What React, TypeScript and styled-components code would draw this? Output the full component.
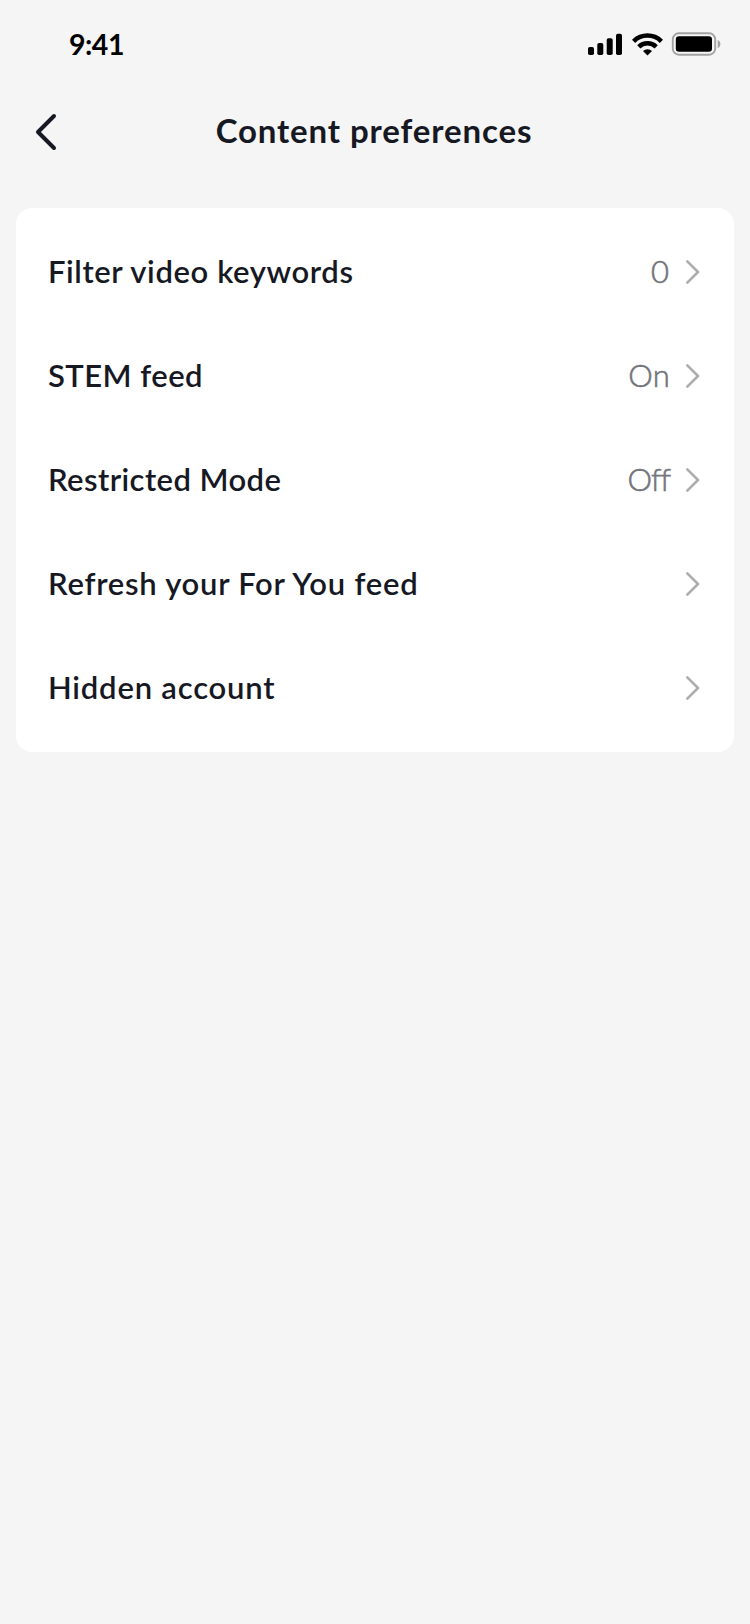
import React from 'react';
import styled, { createGlobalStyle } from 'styled-components';

const GlobalStyle = createGlobalStyle`
  *, *::before, *::after { box-sizing: border-box; }
  body {
    margin: 0;
    background: #f5f5f5;
    color: #161823;
    font-family: Lato, 'Open Sans', sans-serif;
  }
`;

const Screen = styled.div`
  width: 750px;
  min-height: 1624px;
  display: flex;
  flex-direction: column;
  background: #f5f5f5;
`;

const StatusBar = styled.div`
  height: 88px;
  display: flex;
  align-items: center;
  justify-content: space-between;
  padding: 0 28px 0 69px;
`;

const Time = styled.span`
  color: #000;
  font-size: 28.5px;
  font-weight: 700;
  line-height: 34px;
  letter-spacing: -0.5px;
  padding-bottom: 1px;
`;

const StatusIcons = styled.svg`
  display: block;
  width: 134px;
  height: 24px;
`;

const Header = styled.header`
  height: 88px;
  display: grid;
  grid-template-columns: 80px 1fr 80px;
  align-items: center;
  margin-bottom: 32px;
`;

const BackButton = styled.button`
  width: 80px;
  height: 88px;
  display: flex;
  align-items: center;
  padding: 0 0 0 32px;
  border: 0;
  background: none;
  color: #161823;
`;

const Title = styled.h1`
  margin: 0;
  padding: 0 2px 4px 0;
  text-align: center;
  font-size: 33px;
  font-weight: 700;
  line-height: 40px;
  letter-spacing: 0.88px;
`;

const Card = styled.main`
  margin: 0 16px;
  padding: 12px 32px;
  border-radius: 16px;
  background: #fff;
`;

const Row = styled.div`
  height: 104px;
  display: flex;
  align-items: center;
`;

const Label = styled.span<{ $tracking: number }>`
  flex: 1;
  padding-bottom: 2px;
  font-size: 31px;
  font-weight: 600;
  line-height: 36px;
  letter-spacing: ${p => p.$tracking}px;
`;

const Value = styled.span<{ $gap: number; $tracking: number }>`
  margin-right: ${p => p.$gap}px;
  padding-bottom: 2px;
  color: #73747b;
  font-size: 31px;
  font-weight: 300;
  line-height: 36px;
  letter-spacing: ${p => p.$tracking}px;
  -webkit-text-stroke: 0.6px #73747b;
  font-variant-ligatures: none;
`;

const Chevron = styled.svg`
  display: block;
  width: 18px;
  height: 28px;
`;

const rows = [
  { label: 'Filter video keywords', tracking: 0.6, value: '0', gap: 15, valueTracking: 0 },
  { label: 'STEM feed', tracking: 0.45, value: 'On', gap: 14, valueTracking: 0.3 },
  { label: 'Restricted Mode', tracking: 0.42, value: 'Off', gap: 14, valueTracking: -1 },
  { label: 'Refresh your For You feed', tracking: 0.75, value: '', gap: 0, valueTracking: 0 },
  { label: 'Hidden account', tracking: 0.8, value: '', gap: 0, valueTracking: 0 },
];

export default function App() {
  return (
    <Screen>
      <GlobalStyle />
      <StatusBar>
        <Time>9:41</Time>
        <StatusIcons viewBox="0 0 134 24">
          <rect x="0" y="15" width="6" height="8" rx="1.8" />
          <rect x="9.3" y="11" width="6" height="12" rx="1.8" />
          <rect x="18.7" y="6.3" width="6" height="16.7" rx="1.8" />
          <rect x="28" y="1.7" width="6" height="21.3" rx="1.8" />
          <g fill="none" stroke="#000" strokeWidth="4.5">
            <path d="M45.6 9.3a19.8 19.8 0 0 1 27.8 0" />
            <path d="M50.8 14.9a12.4 12.4 0 0 1 17.4 0" />
          </g>
          <path d="M59.5 23.6l-4.5-4.6a6.4 6.4 0 0 1 9 0z" />
          <rect x="84.8" y="1.3" width="42.4" height="21.4" rx="6" fill="none" stroke="#a3a3a3" strokeWidth="1.9" />
          <rect x="87.8" y="4.2" width="36.2" height="15.6" rx="3.2" />
          <path d="M129.7 8v8.2c1.7-.7 2.7-2.2 2.7-4.1s-1-3.4-2.7-4.1z" fill="#a3a3a3" />
        </StatusIcons>
      </StatusBar>
      <Header>
        <BackButton aria-label="Back">
          <svg width="28" height="40" viewBox="0 0 28 40" fill="none" stroke="currentColor" strokeWidth="4" strokeLinecap="round" strokeLinejoin="round">
            <path d="M22 4L6 20l16 16" />
          </svg>
        </BackButton>
        <Title>Content preferences</Title>
      </Header>
      <Card>
        {rows.map(row => (
          <Row key={row.label}>
            <Label $tracking={row.tracking}>{row.label}</Label>
            {row.value && <Value $gap={row.gap} $tracking={row.valueTracking}>{row.value}</Value>}
            <Chevron viewBox="0 0 18 28" fill="none" stroke="#adadb0" strokeWidth="2.7" strokeLinecap="round" strokeLinejoin="round">
              <path d="M3.3 3.4L14 14 3.3 24.6" />
            </Chevron>
          </Row>
        ))}
      </Card>
    </Screen>
  );
}
